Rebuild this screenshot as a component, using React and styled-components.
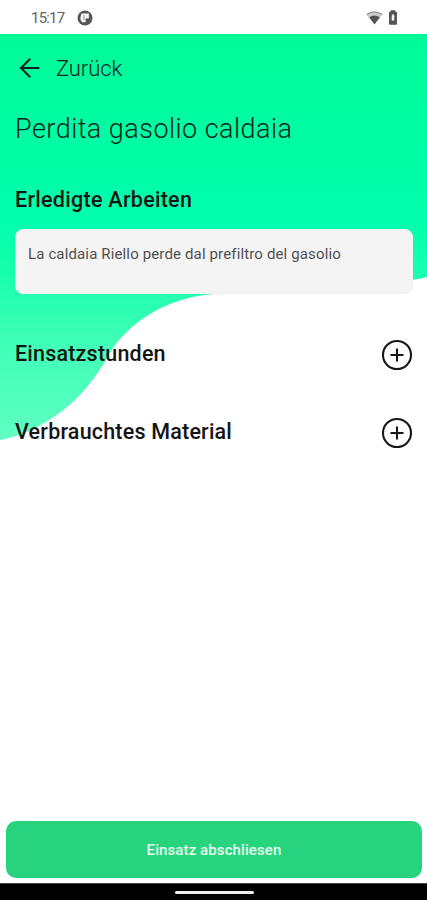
import React from 'react';
import styled, { createGlobalStyle } from 'styled-components';

const GlobalStyle = createGlobalStyle`
  * { box-sizing: border-box; }
  body { margin: 0; background: #fff; font-family: Roboto, sans-serif; }
  button { font: inherit; color: inherit; border: 0; padding: 0; background: none; cursor: pointer; }
`;

const Screen = styled.div`
  display: flex;
  flex-direction: column;
  height: 900px;
  overflow: hidden;
  background: #fff;
`;

const StatusBar = styled.div`
  display: flex;
  align-items: center;
  height: 34px;
  padding: 1px 29px 0 31px;
  flex: none;
`;

const Clock = styled.span`
  width: 46px;
  padding-top: 1px;
  color: #626262;
  font-size: 15px;
  line-height: 18px;
  letter-spacing: -0.8px;
`;

const StatusIcons = styled.div`
  display: flex;
  align-items: center;
  gap: 5px;
  margin-left: auto;
`;

const Main = styled.main`
  position: relative;
  isolation: isolate;
  display: flex;
  flex: 1;
  flex-direction: column;
`;

const Wave = styled.svg`
  position: absolute;
  z-index: -1;
  top: 0;
  left: 0;
  width: 100%;
  height: 408px;
`;

const Content = styled.div`
  display: flex;
  flex-direction: column;
  padding: 17px 14px 0 15px;
`;

const BackButton = styled.button`
  display: flex;
  align-items: center;
  align-self: flex-start;
  gap: 15px;
  height: 34px;
  padding-left: 4px;
  color: #0a2119;
  font-size: 22px;
  font-weight: 350;
  letter-spacing: -0.1px;
`;

const Title = styled.h1`
  margin: 26px 0 0;
  color: #07251a;
  font-size: 27px;
  font-weight: 350;
  line-height: 36px;
  letter-spacing: 0.47px;
  white-space: nowrap;
`;

const SectionTitle = styled.h2`
  margin: 0;
  color: #151515;
  font-size: 21.5px;
  font-weight: 500;
  line-height: 30px;
  letter-spacing: ${({ $spacing }) => $spacing || '0.2px'};
  white-space: nowrap;
`;

const WorkSection = styled.section`
  display: flex;
  flex-direction: column;
  gap: 14px;
  margin-top: 38px;
`;

const NoteBox = styled.div`
  height: 65px;
  padding: 14px 12px;
  border: 1px solid #f0f0f0;
  border-radius: 8px;
  background: #f4f4f4;
  color: #505050;
  font-size: 15px;
  line-height: 20px;
  letter-spacing: 0.14px;
`;

const EntryList = styled.div`
  display: flex;
  flex-direction: column;
  gap: 46px;
  margin-top: 45px;
`;

const EntryRow = styled.section`
  display: flex;
  align-items: flex-start;
  justify-content: space-between;
  height: 32px;
`;

const AddButton = styled.button`
  display: flex;
  width: 32px;
  height: 32px;
`;

const SubmitButton = styled.button`
  height: 57px;
  margin: auto 5px 5px 6px;
  border-radius: 10px;
  background: #28d37e;
  color: #e3ffef;
  font-size: 15px;
  font-weight: 500;
  letter-spacing: 0.1px;
`;

const NavigationBar = styled.div`
  display: flex;
  flex: none;
  align-items: center;
  justify-content: center;
  height: 17px;
  border-top: 1px solid #444;
  background: #000;
`;

const HomeHandle = styled.div`
  width: 79px;
  height: 3px;
  margin-left: 1px;
  border-radius: 2px;
  background: #eee;
`;

const AppBadgeIcon = () => (
  <svg width="16" height="16" viewBox="0 0 16 16">
    <circle cx="8" cy="8" r="7.5" fill="#555" />
    <path d="M4.6 3.6h7.3v4.8H8.6v3.9H5.3C3.8 11 3.2 9 3.4 7.2z" fill="#f4f4f4" />
    <path d="M7 5.2v4.6" stroke="#888" strokeWidth=".9" />
  </svg>
);

const WifiIcon = () => (
  <svg width="17" height="14" viewBox="0 0 17 14">
    <path d="M.5 3.5Q8.5-2.2 16.5 3.5L8.5 13.7z" fill="#ccc" />
    <path d="M.7 3.5Q8.5-1.7 16.3 3.5" fill="none" stroke="#777" strokeWidth="1" />
    <path d="M3.2 6.2Q8.5 2.6 13.8 6.2L8.5 13.3z" fill="#505050" />
  </svg>
);

const BatteryIcon = () => (
  <svg width="10" height="15" viewBox="0 0 10 15">
    <path d="M3 .8h4V2.3h1.5v11.9h-7V2.3H3z" fill="#555" stroke="#555" strokeLinejoin="round" />
    <path d="M5 3.8L3.7 5.8v4.8h2.6V5.8z" fill="#f5f5f5" />
  </svg>
);

const BackIcon = () => (
  <svg width="22" height="22" viewBox="0 0 22 22" fill="none" stroke="#0a2119" strokeWidth="2">
    <path d="M20.4 11H2.3M11.2 1.8L2 11l9.2 9.2" />
  </svg>
);

const PlusCircleIcon = () => (
  <svg width="32" height="32" viewBox="0 0 32 32" fill="none" stroke="#171717" strokeWidth="2.1">
    <circle cx="16" cy="16" r="14" />
    <path d="M16 9.5v13M9.5 16h13" />
  </svg>
);

export default function App() {
  return (
    <Screen>
      <GlobalStyle />
      <StatusBar>
        <Clock>15:17</Clock>
        <AppBadgeIcon />
        <StatusIcons>
          <WifiIcon />
          <BatteryIcon />
        </StatusIcons>
      </StatusBar>
      <Main>
        <Wave viewBox="0 0 427 408" preserveAspectRatio="none" aria-hidden="true">
          <defs>
            <linearGradient id="waveFill" x1="0" y1="0" x2="0" y2="1">
              <stop offset="0" stopColor="#00fa98" />
              <stop offset="0.45" stopColor="#00ffad" />
              <stop offset="0.58" stopColor="#16ffad" />
              <stop offset="0.75" stopColor="#3dffb6" />
              <stop offset="1" stopColor="#60ffc2" />
            </linearGradient>
          </defs>
          <path d="M0 0H427V243C365 257 267 254 205 261C165 266 135 286 115 311C103 330 96 345 75 366C56 384 28 401 0 406Z" fill="url(#waveFill)" />
        </Wave>
        <Content>
          <BackButton>
            <BackIcon />
            Zurück
          </BackButton>
          <Title>Perdita gasolio caldaia</Title>
          <WorkSection>
            <SectionTitle $spacing="0.28px">Erledigte Arbeiten</SectionTitle>
            <NoteBox>La caldaia Riello perde dal prefiltro del gasolio</NoteBox>
          </WorkSection>
          <EntryList>
            <EntryRow>
              <SectionTitle>Einsatzstunden</SectionTitle>
              <AddButton aria-label="Einsatzstunden hinzufügen"><PlusCircleIcon /></AddButton>
            </EntryRow>
            <EntryRow>
              <SectionTitle>Verbrauchtes Material</SectionTitle>
              <AddButton aria-label="Material hinzufügen"><PlusCircleIcon /></AddButton>
            </EntryRow>
          </EntryList>
        </Content>
        <SubmitButton>Einsatz abschliesen</SubmitButton>
      </Main>
      <NavigationBar><HomeHandle /></NavigationBar>
    </Screen>
  );
}
